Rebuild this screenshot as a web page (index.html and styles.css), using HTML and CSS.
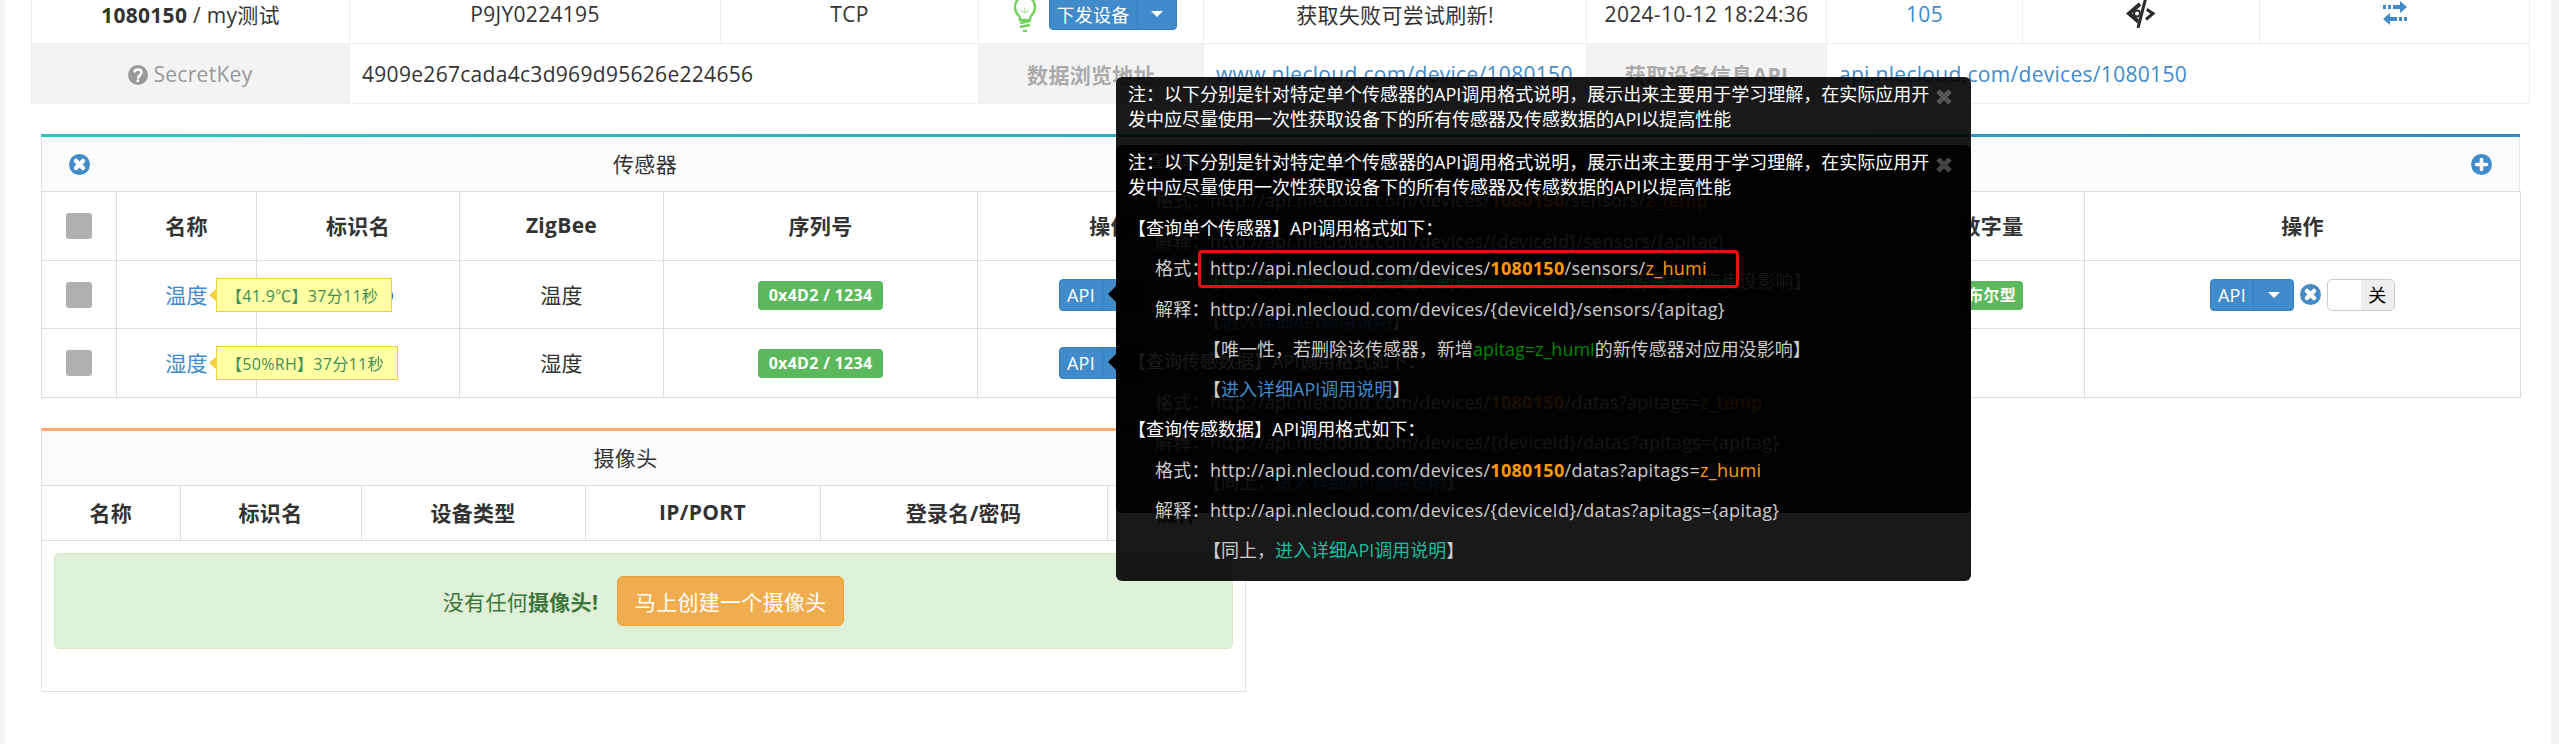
FILE: index.html
```html
<!DOCTYPE html>
<html lang="zh-CN">
<head>
    <meta charset="UTF-8">
    <title>设备详情</title>
    <link rel="stylesheet" href="styles.css">
</head>
<body>
    <div class="main">
        <table class="info">
            <colgroup>
                <col class="i1"><col class="i2"><col class="i3"><col class="i4"><col class="i5"><col class="i6"><col class="i7"><col class="i8"><col class="i9">
            </colgroup>
            <tr>
                <td><b>1080150</b> / my测试</td>
                <td>P9JY0224195</td>
                <td>TCP</td>
                <td>
                    <div class="send">
                        <svg class="bulb" viewBox="0 0 24 36"><path d="M6 20c-3-3-4-6-4-9C2 5 6 1 12 1s10 4 10 10c0 3-1 6-4 9-1 1-1 2-1 4H7c0-2 0-3-1-4z" fill="#fff" stroke="#72d05c" stroke-width="2.4"/><path d="M7 27l10-2M7 31l10-2M10 35h4" fill="none" stroke="#72d05c" stroke-width="2.6"/><path d="M8 14l4 3 4-3M12 17v-5" fill="none" stroke="#bfe8b4" stroke-width="1.4"/></svg>
                        <span class="btn-group btn-send"><span class="btn-text">下发设备</span><span class="btn-caret"><i class="caret"></i></span></span>
                    </div>
                </td>
                <td>获取失败可尝试刷新!</td>
                <td>2024-10-12 18:24:36</td>
                <td><a href="#">105</a></td>
                <td>
                    <svg class="eye" viewBox="0 0 30 28"><path d="M14 4L3 13.500 14 23" fill="none" stroke="#2b2b2b" stroke-width="4"/><circle cx="11" cy="13.500" r="3" fill="none" stroke="#2b2b2b" stroke-width="2"/><path d="M20 9l7 4.500-7 6" fill="none" stroke="#2b2b2b" stroke-width="3"/><path d="M21-1L13 28" stroke="#fff" stroke-width="5"/><path d="M19.500-1L12 28" stroke="#2b2b2b" stroke-width="3"/></svg>
                </td>
                <td>
                    <svg class="swap" viewBox="0 0 26 24"><path d="M1 4h3v4H1zM6 4h3v4H6zM11 4h7V0l7 6-7 6V8h-7zM22 16h3v4h-3zM17 16h3v4h-3zM15 16H8v-4l-7 6 7 6v-4h7z" fill="#428bca"/></svg>
                </td>
            </tr>
            <tr>
                <td class="label label-key"><svg class="help" viewBox="0 0 20 20"><circle cx="10" cy="10" r="10" fill="#999"/><path d="M6.500 7.500c0-2 1.500-3 3.500-3s3.500 1 3.500 3c0 2.500-3 2.500-3 5H9" fill="none" stroke="#fff" stroke-width="2.400"/><circle cx="9.800" cy="15.700" r="1.500" fill="#fff"/></svg>SecretKey</td>
                <td colspan="2" class="left">4909e267cada4c3d969d95626e224656</td>
                <td class="label label-bold">数据浏览地址</td>
                <td class="left"><a href="#">www.nlecloud.com/device/1080150</a></td>
                <td class="label label-bold">获取设备信息API</td>
                <td colspan="3" class="left"><a href="#">api.nlecloud.com/devices/1080150</a></td>
            </tr>
        </table>

        <div class="panel panel-sensor">
            <div class="panel-head">
                <svg class="round-icon" viewBox="0 0 21 21"><circle cx="10.500" cy="10.500" r="10.500" fill="#428bca"/><path d="M7 7l7 7M14 7l-7 7" stroke="#fff" stroke-width="4.500" stroke-linecap="round"/></svg>
                <span class="head-title">传感器</span>
                <svg class="round-icon icon-add" viewBox="0 0 21 21"><circle cx="10.500" cy="10.500" r="10.500" fill="#428bca"/><path d="M10.500 5.500v10M5.500 10.500h10" stroke="#fff" stroke-width="3.600" stroke-linecap="round"/></svg>
            </div>
            <table class="grid">
                <colgroup>
                    <col class="s1"><col class="s2"><col class="s3"><col class="s4"><col class="s5"><col class="s6"><col class="s7"><col class="s8"><col class="s9"><col class="s10">
                </colgroup>
                <tr class="row-head">
                    <th><span class="check"></span></th>
                    <th>名称</th>
                    <th>标识名</th>
                    <th>ZigBee</th>
                    <th>序列号</th>
                    <th>操作</th>
                    <th></th>
                    <th></th>
                    <th>数字量</th>
                    <th>操作</th>
                </tr>
                <tr class="row-one">
                    <td><span class="check check-row"></span></td>
                    <td class="name-cell txt">
                        <a href="#">温度</a>
                        <span class="flag">【41.9℃】37分11秒</span>
                    </td>
                    <td class="tag-name txt">z_temp</td>
                    <td class="txt">温度</td>
                    <td><span class="badge">0x4D2 / 1234</span></td>
                    <td class="op-cell"><span class="btn-group btn-api"><span class="btn-text">API</span><span class="btn-caret"><i class="caret"></i></span></span></td>
                    <td></td>
                    <td></td>
                    <td><span class="badge badge-bool">布尔型</span></td>
                    <td>
                        <div class="ops">
                            <span class="btn-group btn-api"><span class="btn-text">API</span><span class="btn-caret"><i class="caret"></i></span></span>
                            <svg class="round-icon" viewBox="0 0 21 21"><circle cx="10.500" cy="10.500" r="10.500" fill="#428bca"/><path d="M7 7l7 7M14 7l-7 7" stroke="#fff" stroke-width="4.500" stroke-linecap="round"/></svg>
                            <span class="switch"><span class="switch-off">关</span></span>
                        </div>
                    </td>
                </tr>
                <tr class="row-two">
                    <td><span class="check check-row"></span></td>
                    <td class="name-cell txt">
                        <a href="#">湿度</a>
                        <span class="flag flag-tall">【50%RH】37分11秒</span>
                    </td>
                    <td class="tag-name txt">z_humi</td>
                    <td class="txt">湿度</td>
                    <td><span class="badge">0x4D2 / 1234</span></td>
                    <td class="op-cell"><span class="btn-group btn-api"><span class="btn-text">API</span><span class="btn-caret"><i class="caret"></i></span></span></td>
                    <td></td>
                    <td></td>
                    <td></td>
                    <td></td>
                </tr>
            </table>
        </div>

        <div class="panel panel-camera">
            <div class="panel-head camera-head">摄像头</div>
            <table class="grid">
                <colgroup>
                    <col class="c1"><col class="c2"><col class="c3"><col class="c4"><col class="c5"><col class="c6">
                </colgroup>
                <tr class="row-camera">
                    <th>名称</th>
                    <th>标识名</th>
                    <th>设备类型</th>
                    <th>IP/PORT</th>
                    <th>登录名/密码</th>
                    <th>操作</th>
                </tr>
            </table>
            <div class="alert">
                <span>没有任何<b>摄像头!</b></span>
                <a class="btn-create" href="#">马上创建一个摄像头</a>
            </div>
        </div>
    </div>

    <div class="tip tip-under">
        <i class="tip-arrow"></i>
        <svg class="tip-close" viewBox="0 0 18 18"><path d="M3 3l12 12M15 3L3 15" stroke="#555" stroke-width="5"/></svg>
        <p class="note">注：以下分别是针对特定单个传感器的API调用格式说明，展示出来主要用于学习理解，在实际应用开发中应尽量使用一次性获取设备下的所有传感器及传感数据的API以提高性能</p>
        <p class="line title">【查询单个传感器】API调用格式如下：</p>
        <p class="line item">格式：http://api.nlecloud.com/devices/<b>1080150</b>/sensors/<span class="hl">z_temp</span></p>
        <p class="line item">解释：http://api.nlecloud.com/devices/{deviceId}/sensors/{apitag}</p>
        <p class="line sub">【唯一性，若删除该传感器，新增<span class="good">apitag=z_temp</span>的新传感器对应用没影响】</p>
        <p class="line sub">【<a href="#">进入详细API调用说明</a>】</p>
        <p class="line title">【查询传感数据】API调用格式如下：</p>
        <p class="line item">格式：http://api.nlecloud.com/devices/<b>1080150</b>/datas?apitags=<span class="hl">z_temp</span></p>
        <p class="line item">解释：http://api.nlecloud.com/devices/{deviceId}/datas?apitags={apitag}</p>
        <p class="line sub">【同上，<a href="#">进入详细API调用说明</a>】</p>
    </div>

    <div class="tip tip-over">
        <i class="tip-arrow"></i>
        <svg class="tip-close" viewBox="0 0 18 18"><path d="M3 3l12 12M15 3L3 15" stroke="#444" stroke-width="5"/></svg>
        <p class="note">注：以下分别是针对特定单个传感器的API调用格式说明，展示出来主要用于学习理解，在实际应用开发中应尽量使用一次性获取设备下的所有传感器及传感数据的API以提高性能</p>
        <p class="line title">【查询单个传感器】API调用格式如下：</p>
        <p class="line item">格式：<span class="marked">http://api.nlecloud.com/devices/<b>1080150</b>/sensors/<span class="hl">z_humi</span></span></p>
        <p class="line item">解释：http://api.nlecloud.com/devices/{deviceId}/sensors/{apitag}</p>
        <p class="line sub">【唯一性，若删除该传感器，新增<span class="good">apitag=z_humi</span>的新传感器对应用没影响】</p>
        <p class="line sub">【<a href="#">进入详细API调用说明</a>】</p>
        <p class="line title">【查询传感数据】API调用格式如下：</p>
        <p class="line item">格式：http://api.nlecloud.com/devices/<b>1080150</b>/datas?apitags=<span class="hl">z_humi</span></p>
        <p class="line item">解释：http://api.nlecloud.com/devices/{deviceId}/datas?apitags={apitag}</p>
        <p class="line sub">【同上，<a class="teal" href="#">进入详细API调用说明</a>】</p>
    </div>
</body>
</html>
```

FILE: styles.css
```css
body {
    margin: 0;
    height: 744px;
    overflow: hidden;
    background: #f4f4f4;
    font-family: "Open Sans", "Noto Sans CJK SC", sans-serif;
    font-size: 21px;
    letter-spacing: .3px;
    color: #333;
}
a {
    color: #428bca;
    text-decoration: none;
}
table {
    border-collapse: collapse;
    table-layout: fixed;
    width: 100%;
}
td, th {
    padding: 0;
    text-align: center;
    vertical-align: middle;
}
.main {
    margin: -17px 8px 0 5px;
    padding: 0 22px 0 26px;
    height: 761px;
    background: #fff;
}

/* device info table */
.info {
    width: 2498px;
}
.info td {
    height: 59px;
    border: 1px solid #efefef;
}
.i1 { width: 318px; }
.i2 { width: 371px; }
.i3 { width: 258px; }
.i4 { width: 225px; }
.i5 { width: 383px; }
.i6 { width: 240px; }
.i7 { width: 196px; }
.i8 { width: 237px; }
.i9 { width: 270px; }
.info .left {
    text-align: left;
    padding-left: 12px;
}
.info .label {
    background: #f3f3f3;
    color: #999;
}
.info .label-bold {
    font-weight: bold;
    color: #aaa;
}
.help {
    width: 20px;
    height: 20px;
    margin-right: 5px;
    vertical-align: -3px;
}
.send {
    display: flex;
    align-items: center;
    justify-content: center;
    gap: 12px;
    padding-left: 7px;
}
.bulb {
    width: 24px;
    height: 36px;
}
.eye {
    display: block;
    width: 30px;
    height: 28px;
    margin: 0 auto;
}
.swap {
    display: block;
    width: 26px;
    height: 24px;
    margin: 0 auto 2px;
}

/* split buttons */
.btn-group {
    display: inline-flex;
    vertical-align: middle;
    background: #428bca;
    border: 1px solid #357ebd;
    border-radius: 4px;
    color: #fff;
    box-sizing: border-box;
}
.btn-text {
    display: flex;
    align-items: center;
    justify-content: center;
    border-right: 1px solid #357ebd;
    box-sizing: border-box;
}
.btn-caret {
    display: flex;
    align-items: center;
    justify-content: center;
    flex: 1;
}
.caret {
    width: 0;
    height: 0;
    border-top: 6px solid #fff;
    border-left: 6px solid transparent;
    border-right: 6px solid transparent;
}
.btn-send {
    width: 128px;
    height: 33px;
    font-size: 18px;
}
.btn-send .btn-text {
    width: 88px;
}
.btn-api {
    width: 84px;
    height: 32px;
    font-size: 18px;
}
.btn-api .btn-text {
    width: 43px;
}

/* panels */
.panel {
    width: 2479px;
    margin: 30px 0 0 10px;
    border-top: 3px solid #2ac6c0;
    box-sizing: border-box;
}
.panel-sensor {
    border-image: linear-gradient(to right, #2ac6c0, #2a8fc4) 1;
    border-width: 3px 0 0;
    border-style: solid;
}
.panel-camera {
    width: 1205px;
    height: 264px;
    border-top-color: #ffa970;
    border-left: 1px solid #e3e3e3;
    border-right: 1px solid #e3e3e3;
    border-bottom: 1px solid #ddd;
}
.panel-head {
    position: relative;
    display: flex;
    align-items: center;
    justify-content: center;
    height: 54px;
    background: #fbfbfb;
}
.panel-sensor .panel-head {
    justify-content: flex-start;
    border-left: 1px solid #e3e3e3;
    border-right: 1px solid #e3e3e3;
}
.round-icon {
    width: 21px;
    height: 21px;
    flex: none;
}
.panel-head .round-icon {
    margin-left: 27px;
}
.head-title {
    width: 1110px;
    padding-bottom: 2px;
    text-align: center;
}
.panel-head .icon-add {
    margin-left: auto;
    margin-right: 27px;
}
.camera-head {
    box-sizing: border-box;
    padding: 0 36px 2px 0;
}
.grid th, .grid td {
    border: 1px solid #ddd;
}
.grid th {
    font-weight: bold;
    padding-bottom: 2px;
}
.s1 { width: 75px; }
.s2 { width: 140px; }
.s3 { width: 203px; }
.s4 { width: 204px; }
.s5 { width: 314px; }
.s6 { width: 266px; }
.s7 { width: 287px; }
.s8 { width: 368px; }
.s9 { width: 186px; }
.s10 { width: 436px; }
.row-head th { height: 66px; }
.row-head th:first-child {
    height: 68px;
    padding-bottom: 0;
}
.row-one td { height: 67px; }
.row-two td { height: 68px; }
.row-one .txt {
    height: 65px;
    padding-bottom: 2px;
}
.row-two .txt {
    height: 66px;
    padding-bottom: 2px;
}
.check {
    display: block;
    width: 26px;
    height: 26px;
    margin: 0 auto;
    background: #b0b0b0;
    border-radius: 3px;
}
.name-cell {
    position: relative;
}
.tag-name {
    color: #14148c;
}
.flag {
    position: absolute;
    left: 99px;
    top: 17px;
    height: 34px;
    padding: 0 13px 0 9px;
    display: flex;
    align-items: center;
    box-sizing: border-box;
    white-space: nowrap;
    background: #ffffa3;
    border: 1px solid #f0cf3a;
    font-size: 16px;
    color: #3f8f5a;
}
.flag::before {
    content: "";
    position: absolute;
    left: -8px;
    top: 9px;
    border-right: 8px solid #f4d13c;
    border-top: 7px solid transparent;
    border-bottom: 7px solid transparent;
}
.badge {
    display: inline-block;
    width: 125px;
    height: 29px;
    line-height: 29px;
    border-radius: 4px;
    background: #5cb85c;
    color: #fff;
    font-size: 16px;
    font-weight: bold;
    vertical-align: middle;
}
.badge-bool {
    width: 62px;
}
.op-cell {
    text-align: left;
}
.op-cell .btn-group {
    margin-left: 81px;
}
.ops {
    display: flex;
    align-items: center;
    justify-content: center;
    gap: 6px;
}
.switch {
    display: flex;
    justify-content: flex-end;
    width: 68px;
    height: 32px;
    box-sizing: border-box;
    border: 1px solid #ccc;
    border-radius: 5px;
    background: #fff;
    overflow: hidden;
}
.switch-off {
    width: 33px;
    text-align: center;
    line-height: 30px;
    background: #eee;
    font-size: 18px;
    color: #000;
}

/* camera table */
.c1 { width: 138px; }
.c2 { width: 181px; }
.c3 { width: 224px; }
.c4 { width: 235px; }
.c5 { width: 287px; }
.c6 { width: 140px; }
.row-camera th { height: 52px; }
.row-camera th:first-child { border-left: 0; }
.row-camera th:last-child { border-right: 0; }
.alert {
    display: flex;
    align-items: center;
    justify-content: center;
    gap: 19px;
    height: 96px;
    margin: 12px 12px 0;
    box-sizing: border-box;
    background: #dff0d8;
    border: 1px solid #d6e9c6;
    border-radius: 5px;
    color: #3c763d;
}
.btn-create {
    display: flex;
    align-items: center;
    justify-content: center;
    width: 227px;
    height: 50px;
    box-sizing: border-box;
    background: #f0ad4e;
    border: 1px solid #eea236;
    border-radius: 6px;
    color: #fff;
}

/* the two stacked api tips */
.tip {
    position: absolute;
    left: 1116px;
    width: 855px;
    box-sizing: border-box;
    padding: 5px 12px;
    background: rgba(0, 0, 0, .9);
    border-radius: 6px;
    font-size: 18px;
    color: #ccc;
}
.tip-under {
    top: 77px;
    height: 504px;
}
.tip-over {
    top: 145px;
    height: 368px;
}
.tip-arrow {
    position: absolute;
    left: -8px;
    top: 209px;
    border-right: 8px solid #000;
    border-top: 8px solid transparent;
    border-bottom: 8px solid transparent;
}
.tip-close {
    position: absolute;
    right: 18px;
    top: 11px;
    width: 18px;
    height: 18px;
}
.tip p {
    margin: 0;
}
.tip .note {
    width: 812px;
    line-height: 25px;
    margin-bottom: 8px;
    letter-spacing: 0;
    color: #fff;
}
.line {
    height: 40.25px;
    line-height: 40px;
    white-space: nowrap;
}
.title {
    letter-spacing: 0;
    color: #fff;
}
.item {
    padding-left: 27px;
}
.sub {
    padding-left: 75px;
    letter-spacing: 0;
}
.item b {
    color: #f90;
}
.hl {
    color: #f90;
}
.good {
    color: #080;
}
.teal {
    color: #1abc9c;
}
.marked {
    position: relative;
}
.marked::after {
    content: "";
    position: absolute;
    left: -12px;
    right: -32px;
    top: -6px;
    bottom: -8px;
    border: 3px solid #e8100c;
    border-radius: 4px;
}
```
